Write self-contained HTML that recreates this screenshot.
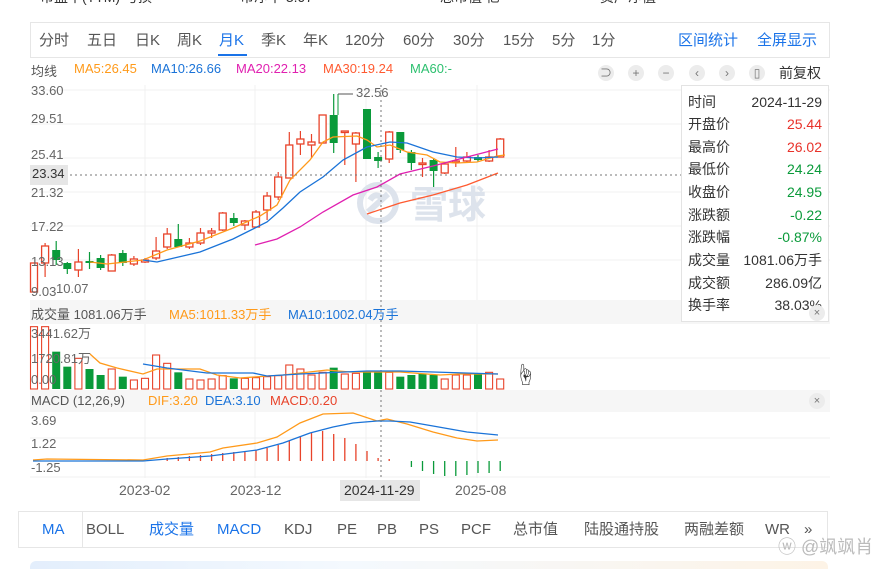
<!DOCTYPE html>
<html><head><meta charset="utf-8"><style>
*{margin:0;padding:0;box-sizing:border-box}
body{width:875px;height:567px;background:#fff;position:relative;overflow:hidden;font-family:"Liberation Sans","Noto Sans CJK SC",sans-serif;color:#333}
.a{position:absolute;white-space:nowrap}
.tb{left:30px;top:22px;width:800px;height:36px;border:1px solid #e6e6e6}
.tb span{position:absolute;top:8px;font-size:15px;line-height:20px;color:#555}
.lab{font-size:13px;color:#666}
.tip{left:681px;top:85px;width:148px;height:237px;border:1px solid #e3e3e3;background:#fff;font-size:14px}
.tip div{position:absolute;left:6px;right:6px;height:22px;line-height:22px}
.tip b{font-weight:normal;position:absolute;left:0;top:0;color:#333;line-height:22px}
.tip i{font-style:normal;position:absolute;right:0;top:0;line-height:22px}
.bt{left:18px;top:511px;width:810px;height:37px;border:1px solid #e6e6e6}
.bt span{position:absolute;top:8px;font-size:15px;line-height:20px;color:#555}
.ic{width:16px;height:16px;border-radius:50%;background:#ececec;color:#777;font-size:12px;text-align:center;line-height:16px;top:65px}
</style></head><body>
<div class="a" style="left:40px;top:-13px;font-size:14px;color:#333">市盈率(TTM) 亏损</div>
<div class="a" style="left:240px;top:-13px;font-size:14px;color:#333">市净率 3.97</div>
<div class="a" style="left:440px;top:-13px;font-size:14px;color:#333">总市值 亿</div>
<div class="a" style="left:600px;top:-13px;font-size:14px;color:#333">资产净值</div>

<div class="a tb">
<span style="left:8px">分时</span><span style="left:56px">五日</span><span style="left:104px">日K</span><span style="left:146px">周K</span><span style="left:188px;color:#1a73e8">月K</span>
<div style="position:absolute;left:187px;top:31px;width:29px;height:2px;background:#1a73e8"></div>
<span style="left:230px">季K</span><span style="left:272px">年K</span><span style="left:314px">120分</span><span style="left:372px">60分</span><span style="left:422px">30分</span><span style="left:472px">15分</span><span style="left:521px">5分</span><span style="left:561px">1分</span>
<span style="left:647px;color:#1a73e8">区间统计</span><span style="left:726px;color:#1a73e8">全屏显示</span>
</div>

<div class="a lab" style="left:31px;top:61px;color:#555">均线</div>
<div class="a" style="left:74px;top:61px;font-size:13px;color:#ff9a1a">MA5:26.45</div>
<div class="a" style="left:151px;top:61px;font-size:13px;color:#1a73d8">MA10:26.66</div>
<div class="a" style="left:236px;top:61px;font-size:13px;color:#e020b0">MA20:22.13</div>
<div class="a" style="left:323px;top:61px;font-size:13px;color:#ff5a30">MA30:19.24</div>
<div class="a" style="left:410px;top:61px;font-size:13px;color:#2ec070">MA60:-</div>

<div class="a ic" style="left:598px">⊃</div>
<div class="a ic" style="left:628px">+</div>
<div class="a ic" style="left:658px">−</div>
<div class="a ic" style="left:689px">‹</div>
<div class="a ic" style="left:719px">›</div>
<div class="a ic" style="left:749px">▯</div>
<div class="a" style="left:779px;top:63px;font-size:14px;color:#333">前复权</div>

<svg class="a" style="left:0;top:0" width="875" height="567">
<g stroke="#f0f0f0" stroke-width="1">
<line x1="30" y1="90" x2="830" y2="90"/><line x1="30" y1="124" x2="830" y2="124"/><line x1="30" y1="158" x2="830" y2="158"/><line x1="30" y1="192" x2="830" y2="192"/><line x1="30" y1="226" x2="830" y2="226"/><line x1="30" y1="260" x2="830" y2="260"/>
<line x1="145" y1="85" x2="145" y2="478"/><line x1="255" y1="85" x2="255" y2="478"/><line x1="366" y1="85" x2="366" y2="478"/><line x1="477" y1="85" x2="477" y2="478"/>
<line x1="30" y1="358" x2="830" y2="358"/><line x1="30" y1="438" x2="830" y2="438"/><line x1="30" y1="477" x2="830" y2="477"/>
</g>
<rect x="30" y="300" width="800" height="24" fill="#f6f6f6"/>
<rect x="30" y="390" width="800" height="22" fill="#f6f6f6"/>
<g fill="none" stroke="#dde3ec" stroke-width="6"><circle cx="378" cy="203" r="18"/><path d="M368 212 L388 194 M370 200 q5-8 12-2"/></g>
<text x="410" y="218" font-size="38" fill="#dde3ec" font-family="Noto Sans CJK SC,sans-serif" font-weight="bold">雪球</text>
<g id="cand"></g>
<g fill="none" stroke-width="1.3">
<polyline stroke="#ff9a1a" points="90,262 107,264 143,260 167,250 200,241 233,228 260,216 277,205 290,180 310,160 323,142 333,137 357,136 367,140 377,147 390,145 407,152 427,155 440,162 457,163 477,162 497,156 505,155"/>
<polyline stroke="#1a73d8" points="143,260 157,262 200,252 233,239 267,222 283,208 300,192 323,177 343,160 367,147 390,142 407,143 433,152 457,157 477,158 498,157"/>
<polyline stroke="#e020b0" points="255,245 277,239 300,227 323,212 353,195 377,187 400,174 433,166 467,157 498,149"/>
<polyline stroke="#ff5a30" points="367,214 400,203 433,195 467,185 498,173"/>
</g>
<line x1="338" y1="94" x2="338" y2="115" stroke="#0a9a3a"/>
<polyline points="338,94 353,94" fill="none" stroke="#555"/>
<line x1="30" y1="175" x2="830" y2="175" stroke="#777" stroke-dasharray="2,3"/>
<line x1="381" y1="85" x2="381" y2="478" stroke="#777" stroke-dasharray="2,3"/>
<g id="vol"></g>
<g fill="none" stroke-width="1.3">
<polyline stroke="#ff9a1a" points="90,354 100,363 117,368 143,374 157,369 200,369 217,375 240,378 283,375 327,370 350,372 400,372 440,375 460,374 498,374"/>
<polyline stroke="#1a73d8" points="143,364 167,368 207,373 253,373 267,376 300,374 367,371 400,371 433,372 498,374"/>
</g>
<g id="mac"></g>
<g fill="none" stroke-width="1.3">
<polyline stroke="#ff9a1a" points="33,460 47,459 143,460 167,456 210,452 223,448 257,443 277,437 300,423 323,414 353,413 377,421 387,419 407,424 433,432 457,438 477,441 498,440"/>
<polyline stroke="#1a73d8" points="33,461 143,461 167,459 210,456 257,450 283,443 310,433 333,427 353,423 377,421 390,421 410,422 433,426 467,432 498,435"/>
</g>
<rect x="30" y="165" width="38" height="20" fill="#e6e6e6"/>
<rect x="340" y="480" width="80" height="21" fill="#e6e6e6"/>
</svg>

<div class="a lab" style="left:31px;top:83px">33.60</div>
<div class="a lab" style="left:31px;top:111px">29.51</div>
<div class="a lab" style="left:31px;top:147px">25.41</div>
<div class="a lab" style="left:32px;top:166px;color:#333">23.34</div>
<div class="a lab" style="left:31px;top:185px">21.32</div>
<div class="a lab" style="left:31px;top:219px">17.22</div>
<div class="a lab" style="left:31px;top:254px">13.13</div>
<div class="a lab" style="left:31px;top:284px">9.03</div>
<div class="a lab" style="left:56px;top:281px">10.07</div>
<div class="a lab" style="left:356px;top:85px">32.56</div>

<div class="a" style="left:31px;top:304px;font-size:13px;color:#555">成交量 1081.06万手</div>
<div class="a" style="left:169px;top:304px;font-size:13px;color:#ff9a1a">MA5:1011.33万手</div>
<div class="a" style="left:288px;top:304px;font-size:13px;color:#1a73d8">MA10:1002.04万手</div>
<div class="a lab" style="left:31px;top:323px">3441.62万</div>
<div class="a lab" style="left:31px;top:348px">1720.81万</div>
<div class="a lab" style="left:31px;top:372px">0.00</div>
<div class="a" style="left:514px;top:358px;font-size:22px;color:#333">☝</div>

<div class="a" style="left:31px;top:393px;font-size:13px;color:#555">MACD (12,26,9)</div>
<div class="a" style="left:148px;top:393px;font-size:13px;color:#ff9a1a">DIF:3.20</div>
<div class="a" style="left:205px;top:393px;font-size:13px;color:#1a73d8">DEA:3.10</div>
<div class="a" style="left:270px;top:393px;font-size:13px;color:#e8432a">MACD:0.20</div>
<div class="a lab" style="left:31px;top:413px">3.69</div>
<div class="a lab" style="left:31px;top:436px">1.22</div>
<div class="a lab" style="left:31px;top:460px">-1.25</div>
<div class="a ic" style="left:809px;top:393px;font-size:11px">×</div>

<div class="a lab" style="left:119px;top:482px;font-size:14px">2023-02</div>
<div class="a lab" style="left:230px;top:482px;font-size:14px">2023-12</div>
<div class="a lab" style="left:344px;top:482px;font-size:14px;color:#333">2024-11-29</div>
<div class="a lab" style="left:455px;top:482px;font-size:14px">2025-08</div>

<div class="a tip">
<div style="top:5px"><b>时间</b><i>2024-11-29</i></div>
<div style="top:27px"><b>开盘价</b><i style="color:#e8322a">25.44</i></div>
<div style="top:50px"><b>最高价</b><i style="color:#e8322a">26.02</i></div>
<div style="top:72px"><b>最低价</b><i style="color:#0a9a3a">24.24</i></div>
<div style="top:95px"><b>收盘价</b><i style="color:#0a9a3a">24.95</i></div>
<div style="top:118px"><b>涨跌额</b><i style="color:#0a9a3a">-0.22</i></div>
<div style="top:140px"><b>涨跌幅</b><i style="color:#0a9a3a">-0.87%</i></div>
<div style="top:163px"><b>成交量</b><i>1081.06万手</i></div>
<div style="top:186px"><b>成交额</b><i>286.09亿</i></div>
<div style="top:208px"><b>换手率</b><i>38.03%</i></div>
</div>
<div class="a ic" style="left:809px;top:305px;font-size:11px">×</div>

<div class="a bt">
<span style="left:23px;color:#1a73e8">MA</span><span style="left:67px">BOLL</span>
<div style="position:absolute;left:63px;top:0;width:1px;height:35px;background:#e6e6e6"></div>
<span style="left:130px;color:#1a73e8">成交量</span><span style="left:198px;color:#1a73e8">MACD</span><span style="left:265px">KDJ</span><span style="left:318px">PE</span><span style="left:358px">PB</span><span style="left:400px">PS</span><span style="left:442px">PCF</span><span style="left:494px">总市值</span><span style="left:565px">陆股通持股</span><span style="left:665px">两融差额</span><span style="left:746px">WR</span><span style="left:785px">»</span>
</div>
<div class="a" style="left:778px;top:533px;font-size:18px;color:#bbb">ⓦ @飒飒肖</div>
<div class="a" style="left:30px;top:561px;width:798px;height:8px;border-radius:6px 6px 0 0;background:linear-gradient(90deg,#e3eefc,#f4f9fe 40%,#fdf3e6)"></div>

<script>
var C=[[263,292,263,292,'r'],[246,263,243,277,'r'],[250,260,241,265,'g'],[263,269,262,274,'g'],[262,270,249,277,'r'],[261,263,252,269,'g'],[258,268,255,270,'g'],[255,271,254,271,'r'],[253,263,250,266,'g'],[259,264,256,266,'r'],[260,262,258,263,'r'],[251,258,237,260,'r'],[234,247,228,249,'r'],[239,247,224,247,'g'],[243,247,238,249,'r'],[233,243,228,245,'r'],[231,233,228,238,'r'],[213,230,212,231,'r'],[218,223,213,226,'g'],[221,225,220,230,'r'],[212,227,210,227,'r'],[196,210,192,220,'r'],[177,197,172,200,'r'],[145,178,132,178,'r'],[139,144,131,155,'r'],[142,145,134,158,'r'],[115,143,115,143,'r'],[115,143,94,153,'g'],[131,132,131,165,'r'],[133,144,132,182,'r'],[109,159,109,159,'g'],[157,161,152,168,'g'],[132,159,131,163,'r'],[132,150,132,153,'g'],[152,163,150,170,'g'],[163,164,158,177,'r'],[160,171,158,187,'g'],[164,173,164,174,'r'],[161,162,147,167,'r'],[157,161,152,162,'r'],[157,160,155,162,'g'],[157,161,150,162,'r'],[139,157,138,157,'r']];
var V=[95,95,170,215,190,222,240,222,245,255,250,180,205,232,252,255,252,242,250,250,248,245,242,210,222,240,232,218,237,235,230,228,232,245,240,237,240,252,240,240,238,232,252];
var VT="rrggrggrgrrrrgrrrrgrrrrrrrrgrrggrggggrrrgrr";
var M=[0,0,0,0,0,0,0,0,0,0,0,0,3,4,5,6,7,8,9,10,11,13,16,20,25,28,30,27,23,17,10,3,2,0,-6,-10,-13,-15,-15,-14,-12,-12,-10];
var s='',v='',m='';
for(var i=0;i<C.length;i++){var x=34+i*11.1,c=C[i],col=c[4]=='r'?'#e8432a':'#0a9a3a';
s+='<line x1="'+x+'" y1="'+c[2]+'" x2="'+x+'" y2="'+c[3]+'" stroke="'+col+'" stroke-width="1.2"/>';
var h=Math.max(c[1]-c[0],1.5);
s+= c[4]=='r'?'<rect x="'+(x-3.5)+'" y="'+c[0]+'" width="7" height="'+h+'" fill="#fff" stroke="'+col+'" stroke-width="1.3"/>':'<rect x="'+(x-4)+'" y="'+c[0]+'" width="8" height="'+h+'" fill="'+col+'"/>';
var t=295+V[i]/3,vc=VT[i]=='r'?'#e8432a':'#0a9a3a';
v+= VT[i]=='r'?'<rect x="'+(x-3.5)+'" y="'+t+'" width="7" height="'+(389-t)+'" fill="#fff" stroke="'+vc+'" stroke-width="1.1"/>':'<rect x="'+(x-4)+'" y="'+t+'" width="8" height="'+(389-t)+'" fill="'+vc+'"/>';
if(M[i])m+='<line x1="'+x+'" y1="461" x2="'+x+'" y2="'+(461-M[i])+'" stroke="'+(M[i]>0?'#e8432a':'#0a9a3a')+'" stroke-width="1.3"/>';}
document.getElementById('cand').innerHTML=s;document.getElementById('vol').innerHTML=v;document.getElementById('mac').innerHTML=m;
</script>
</body></html>
